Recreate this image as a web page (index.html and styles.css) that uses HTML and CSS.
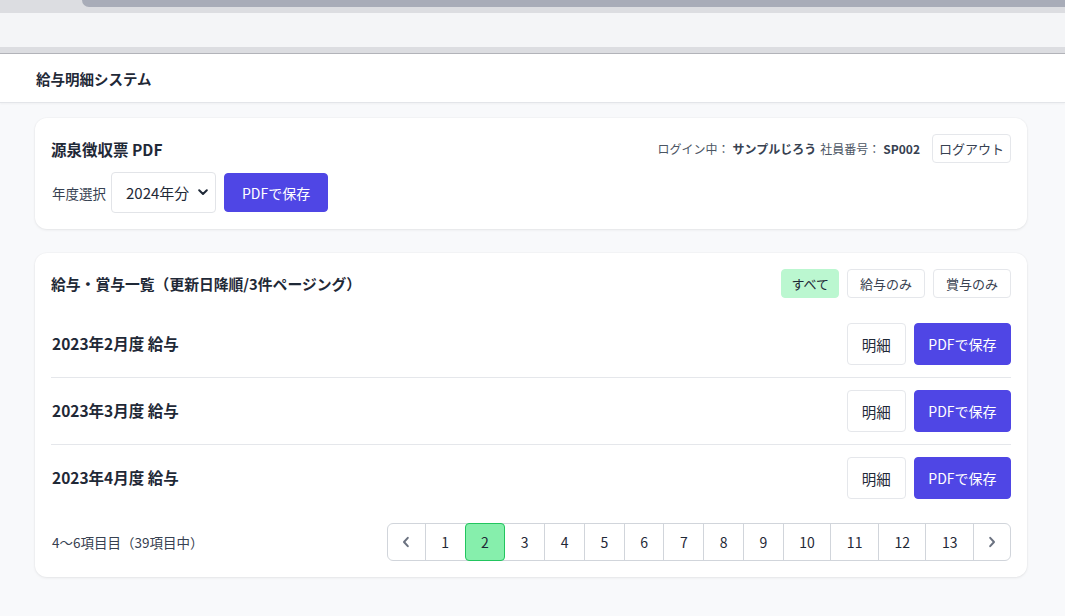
FILE: index.html
```html
<!DOCTYPE html>
<html lang="ja">
<head>
<meta charset="utf-8">
<title>給与明細システム</title>
<link rel="stylesheet" href="styles.css">
</head>
<body>
<div class="chrome">
  <div class="chrome-top"><div class="chrome-tab"></div></div>
  <div class="chrome-bar"></div>
  <div class="chrome-bottom"></div>
</div>
<header class="app-header">
  <div class="container">
    <h1 class="app-title">給与明細システム</h1>
  </div>
</header>
<main class="container main">
  <section class="card">
    <div class="card-head">
      <h2 class="card-title">源泉徴収票 PDF</h2>
      <div class="user">
        <span>ログイン中：</span><strong>サンプルじろう</strong><span>社員番号：</span><strong>SP002</strong>
        <button class="btn btn-outline btn-sm">ログアウト</button>
      </div>
    </div>
    <div class="year-row">
      <label class="year-label" for="year">年度選択</label>
      <span class="select-wrap">
        <select id="year" class="select"><option>2024年分</option></select>
        <svg class="select-arrow" width="10" height="7" viewBox="0 0 10 7"><path d="M1.2 1.3 L5 5 L8.8 1.3" fill="none" stroke="#1f2937" stroke-width="2" stroke-linecap="round" stroke-linejoin="round"/></svg>
      </span>
      <button class="btn btn-primary btn-year">PDFで保存</button>
    </div>
  </section>

  <section class="card">
    <div class="card-head list-head">
      <h2 class="card-title">給与・賞与一覧（更新日降順/3件ページング）</h2>
      <div class="filters">
        <button class="btn btn-filter is-active">すべて</button>
        <button class="btn btn-filter">給与のみ</button>
        <button class="btn btn-filter">賞与のみ</button>
      </div>
    </div>
    <ul class="list">
      <li class="item">
        <span class="item-title">2023年2月度 給与</span>
        <div class="item-actions">
          <button class="btn btn-outline btn-lg">明細</button>
          <button class="btn btn-primary btn-lg">PDFで保存</button>
        </div>
      </li>
      <li class="item">
        <span class="item-title">2023年3月度 給与</span>
        <div class="item-actions">
          <button class="btn btn-outline btn-lg">明細</button>
          <button class="btn btn-primary btn-lg">PDFで保存</button>
        </div>
      </li>
      <li class="item">
        <span class="item-title">2023年4月度 給与</span>
        <div class="item-actions">
          <button class="btn btn-outline btn-lg">明細</button>
          <button class="btn btn-primary btn-lg">PDFで保存</button>
        </div>
      </li>
    </ul>
    <div class="pager-row">
      <span class="pager-info">4〜6項目目（39項目中）</span>
      <nav class="pager">
        <a class="page page-arrow"><svg width="8" height="12" viewBox="0 0 8 12"><path d="M5.8 1.8 L2 6 L5.8 10.2" fill="none" stroke="#6b7280" stroke-width="2" stroke-linecap="round" stroke-linejoin="round"/></svg></a>
        <a class="page">1</a>
        <a class="page is-current">2</a>
        <a class="page">3</a>
        <a class="page">4</a>
        <a class="page">5</a>
        <a class="page">6</a>
        <a class="page">7</a>
        <a class="page">8</a>
        <a class="page">9</a>
        <a class="page">10</a>
        <a class="page">11</a>
        <a class="page">12</a>
        <a class="page">13</a>
        <a class="page page-arrow"><svg width="8" height="12" viewBox="0 0 8 12"><path d="M2.2 1.8 L6 6 L2.2 10.2" fill="none" stroke="#6b7280" stroke-width="2" stroke-linecap="round" stroke-linejoin="round"/></svg></a>
      </nav>
    </div>
  </section>
</main>
</body>
</html>
```

FILE: styles.css
```css
* { box-sizing: border-box; }

html, body {
  margin: 0;
  padding: 0;
}

body {
  background: #f8f9fb;
  color: #1f2937;
  font-family: "Noto Sans CJK JP", "Noto Sans", sans-serif;
  font-size: 13px;
}

/* browser-like chrome strip */
.chrome-top {
  height: 13px;
  background: #dcdde1;
  padding-left: 82px;
}
.chrome-tab {
  height: 7px;
  background: #a8acb8;
  border-bottom-left-radius: 8px;
}
.chrome-bar {
  height: 34px;
  background: #f4f5f7;
}
.chrome-bottom {
  height: 7px;
  background: #dcdde1;
  border-bottom: 1px solid #b2b3b9;
}

.container {
  padding-left: 35px;
  padding-right: 38px;
}

.app-header {
  background: #fff;
  height: 49px;
  border-bottom: 1px solid #e3e5e9;
  box-shadow: 0 1px 2px rgba(0, 0, 0, 0.04);
  display: flex;
  flex-direction: column;
  justify-content: center;
}
.app-title {
  margin: 0 0 0 1px;
  font-size: 14.5px;
  font-weight: 700;
  color: #1f2937;
}

.main {
  padding-top: 15px;
  padding-bottom: 24px;
  display: flex;
  flex-direction: column;
  gap: 24px;
}

.card {
  background: #fff;
  border-radius: 12px;
  box-shadow: 0 1px 3px rgba(0, 0, 0, 0.07), 0 0 0 1px rgba(0, 0, 0, 0.015);
  padding: 16px;
}

.card-head {
  display: flex;
  align-items: center;
  justify-content: space-between;
  height: 29px;
}
.card-title {
  margin: 0;
  font-size: 15.5px;
  font-weight: 700;
  color: #1f2937;
}

.user {
  display: flex;
  align-items: center;
  font-size: 12px;
  color: #4b5563;
}
.user strong {
  color: #374151;
  font-weight: 700;
  margin: 0 4px 0 3px;
}
.user strong:last-of-type {
  margin-right: 12px;
}

.btn {
  font-family: inherit;
  border-radius: 4px;
  cursor: pointer;
  display: inline-flex;
  align-items: center;
  justify-content: center;
  white-space: nowrap;
}
.btn-outline {
  background: #fff;
  border: 1px solid #e5e7eb;
  color: #1f2937;
}
.btn-primary {
  background: #4f46e5;
  border: 1px solid #4f46e5;
  color: #fff;
}
.btn-sm {
  height: 29px;
  padding: 0 6px;
  font-size: 13px;
  color: #374151;
}

.year-row {
  display: flex;
  align-items: center;
  margin-top: 9px;
  height: 41px;
}
.year-label {
  font-size: 13.5px;
  color: #374151;
  margin-right: 5px;
  padding-left: 1px;
}
.select-wrap {
  position: relative;
  display: inline-block;
}
.select {
  appearance: none;
  -webkit-appearance: none;
  width: 105px;
  height: 41px;
  padding: 0 0 0 14px;
  border: 1px solid #e2e4e8;
  border-radius: 4px;
  background: #fff;
  font-family: inherit;
  font-size: 15px;
  color: #1f2937;
}
.select-arrow {
  position: absolute;
  right: 8px;
  top: 17px;
  pointer-events: none;
}
.btn-year {
  margin-left: 8px;
  height: 39px;
  padding: 0 17px;
  font-size: 14px;
}

.list-head {
  margin-bottom: 13px;
}
.list-head .card-title {
  font-size: 14.8px;
}
.filters {
  display: flex;
  gap: 8px;
}
.btn-filter {
  height: 29px;
  padding: 0 12px;
  font-size: 13px;
  background: #fff;
  border: 1px solid #e5e7eb;
  color: #374151;
}
.btn-filter.is-active {
  padding: 0 9px;
  background: #bbf7d0;
  border-color: #bbf7d0;
  color: #1f2937;
}

.list {
  list-style: none;
  margin: 0;
  padding: 0;
}
.item {
  display: flex;
  align-items: center;
  justify-content: space-between;
  padding: 12px 0;
  border-bottom: 1px solid #e5e7eb;
}
.item:last-child {
  border-bottom: none;
}
.item-title {
  font-size: 15.5px;
  font-weight: 700;
  color: #1f2937;
  padding-left: 1px;
  margin-top: -2px;
}
.item-actions {
  display: flex;
  gap: 8px;
}
.btn-lg {
  height: 42px;
  font-size: 14.5px;
}
.btn-outline.btn-lg {
  padding: 0 14px;
}
.btn-primary.btn-lg {
  padding: 0 13.5px;
  font-size: 14px;
}

.pager-row {
  display: flex;
  align-items: center;
  justify-content: space-between;
  margin-top: 12px;
}
.pager-info {
  font-size: 13.5px;
  color: #374151;
  padding-left: 1px;
}
.pager {
  display: flex;
  height: 38px;
  border: 1px solid #d1d5db;
  border-radius: 6px;
  background: #fff;
}
.page {
  display: flex;
  align-items: center;
  justify-content: center;
  padding: 0 15.5px;
  font-size: 14px;
  color: #1f2937;
  border-left: 1px solid #d1d5db;
}
.page:first-child {
  border-left: none;
}
.page-arrow {
  width: 37px;
  padding: 0;
}
.page.is-current {
  background: #86efac;
  border: 1px solid #22c55e;
  border-radius: 4px;
  margin: -1px 0;
  height: 38px;
  position: relative;
}
.page.is-current + .page {
  border-left: none;
}
```
